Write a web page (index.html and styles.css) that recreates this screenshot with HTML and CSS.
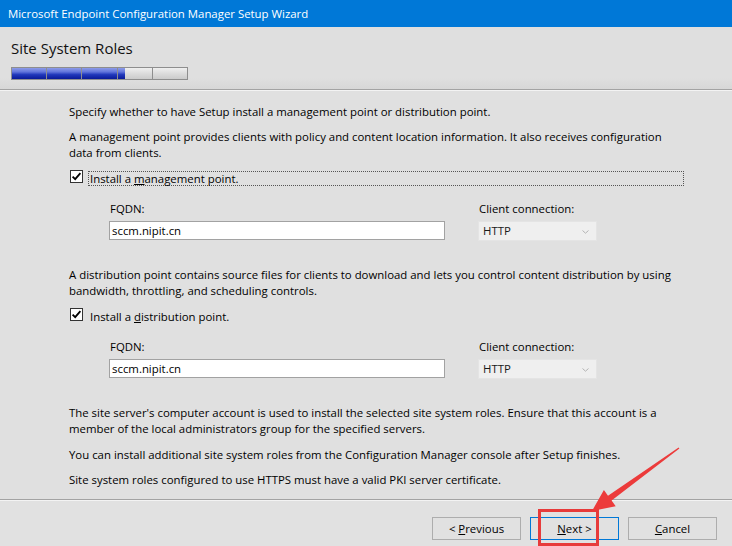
FILE: index.html
```html
<!DOCTYPE html>
<html lang="en">
<head>
<meta charset="utf-8">
<title>Microsoft Endpoint Configuration Manager Setup Wizard</title>
<link rel="stylesheet" href="styles.css">
</head>
<body>
<div class="window">
  <div class="titlebar">Microsoft Endpoint Configuration Manager Setup Wizard</div>
  <div class="header">
    <h1 class="page-title">Site System Roles</h1>
    <div class="progress">
      <div class="seg seg-done"></div>
      <div class="seg seg-done"></div>
      <div class="seg seg-done"></div>
      <div class="seg"><div class="seg-fill" style="width:7px"></div></div>
      <div class="seg"></div>
    </div>
  </div>
  <div class="rule"></div>
  <div class="content">
    <p class="intro">Specify whether to have Setup install a management point or distribution point.</p>
    <p class="para">A management point provides clients with policy and content location information. It also receives configuration<br>data from clients.</p>

    <div class="check-row">
      <span class="checkbox"><svg width="13" height="13" viewBox="0 0 13 13"><rect x="0.5" y="0.5" width="12" height="12" fill="#fff" stroke="#333"/><path d="M2.6 6.6 L5.2 9.2 L10.4 3.2" fill="none" stroke="#000" stroke-width="1.8"/></svg></span>
      <span class="check-label check-label-focus">Install a <u>m</u>anagement point.</span>
    </div>
    <div class="field-grid">
      <span class="field-label">FQDN:</span>
      <span class="field-label">Client connection:</span>
      <div class="textbox">sccm.nipit.cn</div>
      <div class="combo">HTTP<svg class="chev" width="7" height="4" viewBox="0 0 7 4"><path d="M0.5 0.5 L3.5 3.2 L6.5 0.5" fill="none" stroke="#b4b4b4" stroke-width="1"/></svg></div>
    </div>

    <p class="para section">A distribution point contains source files for clients to download and lets you control content distribution by using<br>bandwidth, throttling, and scheduling controls.</p>
    <div class="check-row">
      <span class="checkbox"><svg width="13" height="13" viewBox="0 0 13 13"><rect x="0.5" y="0.5" width="12" height="12" fill="#fff" stroke="#333"/><path d="M2.6 6.6 L5.2 9.2 L10.4 3.2" fill="none" stroke="#000" stroke-width="1.8"/></svg></span>
      <span class="check-label">Install a <u>d</u>istribution point.</span>
    </div>
    <div class="field-grid">
      <span class="field-label">FQDN:</span>
      <span class="field-label">Client connection:</span>
      <div class="textbox">sccm.nipit.cn</div>
      <div class="combo">HTTP<svg class="chev" width="7" height="4" viewBox="0 0 7 4"><path d="M0.5 0.5 L3.5 3.2 L6.5 0.5" fill="none" stroke="#b4b4b4" stroke-width="1"/></svg></div>
    </div>

    <p class="para section">The site server's computer account is used to install the selected site system roles. Ensure that this account is a<br>member of the local administrators group for the specified servers.</p>
    <p class="para para-wide">You can install additional site system roles from the Configuration Manager console after Setup finishes.</p>
    <p class="para">Site system roles configured to use HTTPS must have a valid PKI server certificate.</p>
  </div>
  <div class="rule"></div>
  <div class="footer">
    <button class="btn" type="button">&lt; <u>P</u>revious</button>
    <button class="btn btn-default" type="button"><u>N</u>ext &gt;</button>
    <button class="btn" type="button"><u>C</u>ancel</button>
  </div>

  <div class="callout-box"></div>
  <svg class="callout-arrow" width="732" height="546" viewBox="0 0 732 546">
    <polygon points="679.4,448.6 611.6,500.5 615.7,506.2 592,511 603.9,490 608,495.7 678.6,447.4" fill="#ec3b3b"/>
  </svg>
</div>
</body>
</html>
```
FILE: styles.css
```css
* {
  box-sizing: border-box;
  margin: 0;
  padding: 0;
}

html, body {
  width: 732px;
  height: 546px;
  overflow: hidden;
}

body {
  font-family: "Open Sans", "Noto Sans", sans-serif;
  font-size: 11.4px;
  color: #000;
  background: #e1e1e1;
}

.window {
  position: relative;
  display: flex;
  flex-direction: column;
  height: 546px;
}

.titlebar {
  flex: none;
  height: 27px;
  line-height: 27px;
  padding-left: 8px;
  background: #0078d7;
  color: #fff;
}

.header {
  flex: none;
  height: 62px;
  padding: 11px 0 0 11px;
  background: linear-gradient(#dfdfdf 0%, #dfdfdf 82%, #d7d7d7 100%);
}

.page-title {
  font-size: 15px;
  font-weight: normal;
  line-height: 20px;
  height: 20px;
  color: #111;
}

.progress {
  display: flex;
  gap: 1px;
  margin-top: 9px;
  width: 177px;
  height: 13px;
  border: 1px solid #8e8e8e;
  background: #8e8e8e;
}

.seg {
  flex: 1;
  background: linear-gradient(#efefef 0%, #dcdcdc 50%, #cbcbcb 100%);
}

.seg-done,
.seg-fill {
  background: linear-gradient(#8d9be8 0%, #6275dc 35%, #2138bb 60%, #0a1a98 100%);
}

.seg-fill {
  height: 100%;
}

.rule {
  flex: none;
  height: 2px;
  border-top: 1px solid #a3a3a3;
  background: #f3f3f3;
}

.content {
  flex: none;
  height: 408px;
  padding: 13px 0 0 69px;
  background: #e0e0e0;
  line-height: 16px;
  white-space: nowrap;
}

.para {
  margin-top: 9px;
}

.para.section {
  margin-top: 26px;
}

.para.para-wide {
  margin-top: 10px;
}

.check-row {
  display: flex;
  align-items: flex-start;
  margin-top: 9px;
  height: 16px;
}

.checkbox {
  display: block;
  width: 13px;
  height: 13px;
  margin-left: 1px;
}

.checkbox svg {
  display: block;
}

.check-label {
  display: block;
  width: 596px;
  height: 15px;
  margin: 1px 0 0 5px;
  padding-left: 1px;
  line-height: 13px;
  border: 1px dotted transparent;
}

.check-label-focus {
  border-color: #555;
}

.field-grid {
  display: grid;
  grid-template-columns: 336px 119px;
  column-gap: 33px;
  row-gap: 4px;
  margin: 15px 0 0 40px;
  align-items: start;
}

.field-label {
  padding-left: 1px;
  height: 16px;
}

.textbox {
  height: 19px;
  line-height: 17px;
  padding-left: 2px;
  background: #fff;
  border: 1px solid #a2a2a2;
}

.combo {
  position: relative;
  height: 20px;
  line-height: 18px;
  padding-left: 4px;
  background: #efefef;
  border: 1px solid #e4e4e4;
  color: #1a1a1a;
}

.chev {
  position: absolute;
  right: 7px;
  top: 8px;
}

.footer {
  flex: 1;
  display: flex;
  justify-content: flex-end;
  align-items: flex-start;
  gap: 9px;
  padding: 16px 15px 0 0;
  background: #e1e1e1;
}

.btn {
  width: 89px;
  height: 23px;
  font: inherit;
  color: #000;
  background: #e1e1e1;
  border: 1px solid #adadad;
}

.btn-default {
  border-color: #0078d7;
}

.callout-box {
  position: absolute;
  left: 538px;
  top: 509px;
  width: 61px;
  height: 37px;
  border: 3px solid #e73b3b;
}

.callout-arrow {
  position: absolute;
  left: 0;
  top: 0;
  pointer-events: none;
}
```
